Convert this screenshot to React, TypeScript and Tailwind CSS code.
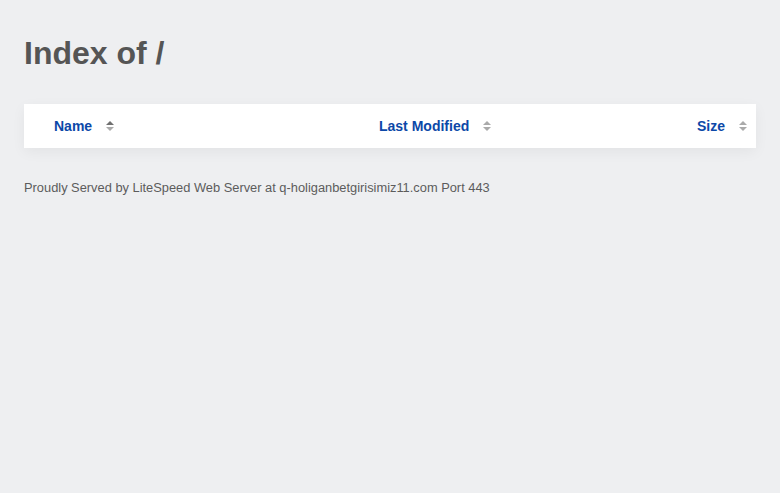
import React from 'react';

const SortIcon = ({ active = false }: { active?: boolean }) => (
  <svg width="8" height="11" viewBox="0 0 8 11" className="ml-[14px] mt-[1px]">
    <polygon points="0,4 4,0 8,4" fill={active ? '#707070' : '#aaaaaa'} />
    <polygon points="0,6 8,6 4,10" fill="#aaaaaa" />
  </svg>
);

const App = () => {
  return (
    <div className="min-h-[493px] bg-[#eeeff1] px-6 pt-[34px] font-['Liberation_Sans',Arial,sans-serif]">
      <h1 className="text-[32px] leading-[38px] font-bold text-[#555555]">Index of /</h1>

      <div className="mt-[32px] bg-white shadow-[0_4px_14px_rgba(0,0,0,0.05)]">
        <div className="flex h-[44px] items-center pl-[30px] pr-[9px] text-[14px] font-bold text-[#0c48a8]">
          <div className="flex w-[325px] items-center">
            <span>Name</span>
            <SortIcon active />
          </div>
          <div className="flex flex-1 items-center">
            <span>Last Modified</span>
            <SortIcon />
          </div>
          <div className="flex items-center">
            <span>Size</span>
            <SortIcon />
          </div>
        </div>
      </div>

      <p className="mt-[30px] text-[12.85px] text-[#5c5c5c]">
        Proudly Served by LiteSpeed Web Server at q-holiganbetgirisimiz11.com Port 443
      </p>
    </div>
  );
};

export default App;
